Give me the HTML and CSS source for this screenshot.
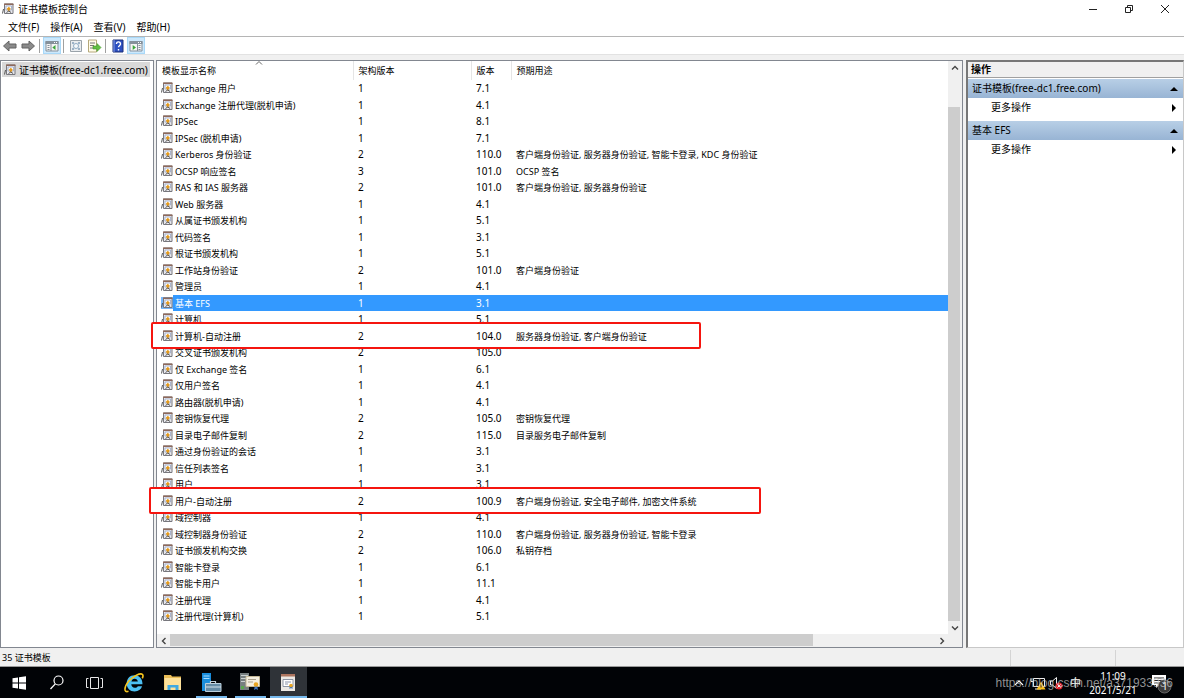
FILE: index.html
```html
<!DOCTYPE html>
<html lang="zh-CN">
<head>
<meta charset="utf-8">
<title>证书模板控制台</title>
<link rel="stylesheet" href="styles.css">
</head>
<body>
<svg class="defs" aria-hidden="true">
  <symbol id="cert" viewBox="0 0 12 12">
    <path d="M2.500 1h8.500v9.500H2.500z" fill="#e9e9ee" stroke="#77777d"/>
    <path d="M2 .5h9.500v1.500H2z" fill="#8f6a5c"/>
    <path d="M4 3h5.500v4H4z" fill="#fff" stroke="#97a4c4" stroke-width=".8"/>
    <path d="M6.800 3.800l2 2-2 3-2-3z" fill="#e39a1c"/>
    <path d="M1.500 6L.500 10.500M4.500 9.500l2.300-1.500 2.300 1.500" fill="none" stroke="#555"/>
  </symbol>
</svg>

<header class="titlebar">
  <svg class="app-icon"><use href="#cert"/></svg>
  <h1>证书模板控制台</h1>
  <div class="window-buttons">
    <button aria-label="最小化"><svg viewBox="0 0 10 10"><path d="M1 5.500h8"/></svg></button>
    <button aria-label="还原"><svg viewBox="0 0 10 10"><path d="M1.500 3.500h5v5h-5zM3.500 3V1.500h5v5H7"/></svg></button>
    <button aria-label="关闭"><svg viewBox="0 0 10 10"><path d="M1 1l8 8M9 1L1 9"/></svg></button>
  </div>
</header>

<nav class="menubar">
  <button>文件(F)</button><button>操作(A)</button><button>查看(V)</button><button>帮助(H)</button>
</nav>

<div class="toolbar">
  <button aria-label="后退"><svg viewBox="0 0 16 14"><path d="M1.500 7L7 2v3h7v4H7v3z" fill="#8b8b8b" stroke="#626262"/></svg></button>
  <button aria-label="前进"><svg viewBox="0 0 16 14"><path d="M14.500 7L9 2v3H2v4h7v3z" fill="#8b8b8b" stroke="#626262"/></svg></button>
  <i class="divider"></i>
  <button class="on" aria-label="显示控制台树"><svg viewBox="0 0 16 14"><path d="M2 2.500h12v9.500H2z" fill="#f4f4f4" stroke="#85909a"/><path d="M1.500 2h13v3h-13z" fill="#85909a"/><path d="M10 3.500h1M12 3.500h1" stroke="#fff"/><path d="M7 5V12M3.500 6.500h2M3.500 8.500h2M3.500 10.500h2" stroke="#85909a"/><path d="M11.500 6v5L8.300 8.500z" fill="#3aa63a"/></svg></button>
  <i class="divider"></i>
  <button aria-label="刷新"><svg viewBox="0 0 16 14"><path d="M2.500 1.500h11v11h-11z" fill="#e9ecef" stroke="#9aa3aa"/><path d="M4 3h2v2H4zM10 3h2v2h-2zM4 9h2v2H4zM10 9h2v2h-2z" fill="#9db2c6"/><circle cx="8" cy="7" r="2.500" fill="#f5f8fa" stroke="#8fabc4"/></svg></button>
  <button aria-label="导出列表"><svg viewBox="0 0 16 14"><path d="M2.500 1h8v12h-8z" fill="#fffbe8" stroke="#b5a87a"/><path d="M4 4h5M4 6.500h4M4 9h4" stroke="#777"/><path d="M7 7h4V4.500L15 8.500l-4 4V10H7z" fill="#62c043" stroke="#3f962a" stroke-width=".6"/></svg></button>
  <i class="divider"></i>
  <button class="help" aria-label="帮助"><svg viewBox="0 0 16 14"><path d="M3 1h10v12H3z" fill="#2c4fc0" stroke="#1d3179"/><path d="M4 1v12" stroke="#8aa0e8"/><path d="M6.500 5c0-3 4-2.700 4 0 0 1.500-2 1.500-2 3.300M8.500 10v1.500" fill="none" stroke="#fff" stroke-width="1.400"/></svg></button>
  <button class="on" aria-label="显示操作窗格"><svg viewBox="0 0 16 14"><path d="M2 2.500h12v9.500H2z" fill="#f4f4f4" stroke="#85909a"/><path d="M1.500 2h13v3h-13z" fill="#85909a"/><path d="M10 3.500h1M12 3.500h1" stroke="#fff"/><path d="M9.500 5V12M10.500 6.500h2M10.500 8.500h2M10.500 10.500h2" stroke="#85909a"/><path d="M4.700 6v5L8 8.500z" fill="#3aa63a"/></svg></button>
</div>

<main class="workspace">
  <aside class="tree">
    <button class="node"><svg class="cert"><use href="#cert"/></svg>证书模板(free-dc1.free.com)</button>
  </aside>

  <section class="list">
    <div class="rows">
      <table>
        <colgroup><col class="c-name"><col class="c-schema"><col class="c-version"><col></colgroup>
        <thead><tr><th>模板显示名称<svg class="sort" viewBox="0 0 8 4"><path d="M1 3.500L4 .5l3 3"/></svg></th><th>架构版本</th><th>版本</th><th>预期用途</th></tr></thead>
        <tbody>
          <tr><td><svg class="cert"><use href="#cert"/></svg>Exchange 用户</td><td>1</td><td>7.1</td><td></td></tr>
          <tr><td><svg class="cert"><use href="#cert"/></svg>Exchange 注册代理(脱机申请)</td><td>1</td><td>4.1</td><td></td></tr>
          <tr><td><svg class="cert"><use href="#cert"/></svg>IPSec</td><td>1</td><td>8.1</td><td></td></tr>
          <tr><td><svg class="cert"><use href="#cert"/></svg>IPSec (脱机申请)</td><td>1</td><td>7.1</td><td></td></tr>
          <tr><td><svg class="cert"><use href="#cert"/></svg>Kerberos 身份验证</td><td>2</td><td>110.0</td><td>客户端身份验证, 服务器身份验证, 智能卡登录, KDC 身份验证</td></tr>
          <tr><td><svg class="cert"><use href="#cert"/></svg>OCSP 响应签名</td><td>3</td><td>101.0</td><td>OCSP 签名</td></tr>
          <tr><td><svg class="cert"><use href="#cert"/></svg>RAS 和 IAS 服务器</td><td>2</td><td>101.0</td><td>客户端身份验证, 服务器身份验证</td></tr>
          <tr><td><svg class="cert"><use href="#cert"/></svg>Web 服务器</td><td>1</td><td>4.1</td><td></td></tr>
          <tr><td><svg class="cert"><use href="#cert"/></svg>从属证书颁发机构</td><td>1</td><td>5.1</td><td></td></tr>
          <tr><td><svg class="cert"><use href="#cert"/></svg>代码签名</td><td>1</td><td>3.1</td><td></td></tr>
          <tr><td><svg class="cert"><use href="#cert"/></svg>根证书颁发机构</td><td>1</td><td>5.1</td><td></td></tr>
          <tr><td><svg class="cert"><use href="#cert"/></svg>工作站身份验证</td><td>2</td><td>101.0</td><td>客户端身份验证</td></tr>
          <tr><td><svg class="cert"><use href="#cert"/></svg>管理员</td><td>1</td><td>4.1</td><td></td></tr>
          <tr class="selected"><td><svg class="cert"><use href="#cert"/></svg>基本 EFS</td><td>1</td><td>3.1</td><td></td></tr>
          <tr><td><svg class="cert"><use href="#cert"/></svg>计算机</td><td>1</td><td>5.1</td><td></td></tr>
          <tr class="marked"><td><span class="mark mark-computer"></span><svg class="cert"><use href="#cert"/></svg>计算机-自动注册</td><td>2</td><td>104.0</td><td>服务器身份验证, 客户端身份验证</td></tr>
          <tr><td><svg class="cert"><use href="#cert"/></svg>交叉证书颁发机构</td><td>2</td><td>105.0</td><td></td></tr>
          <tr><td><svg class="cert"><use href="#cert"/></svg>仅 Exchange 签名</td><td>1</td><td>6.1</td><td></td></tr>
          <tr><td><svg class="cert"><use href="#cert"/></svg>仅用户签名</td><td>1</td><td>4.1</td><td></td></tr>
          <tr><td><svg class="cert"><use href="#cert"/></svg>路由器(脱机申请)</td><td>1</td><td>4.1</td><td></td></tr>
          <tr><td><svg class="cert"><use href="#cert"/></svg>密钥恢复代理</td><td>2</td><td>105.0</td><td>密钥恢复代理</td></tr>
          <tr><td><svg class="cert"><use href="#cert"/></svg>目录电子邮件复制</td><td>2</td><td>115.0</td><td>目录服务电子邮件复制</td></tr>
          <tr><td><svg class="cert"><use href="#cert"/></svg>通过身份验证的会话</td><td>1</td><td>3.1</td><td></td></tr>
          <tr><td><svg class="cert"><use href="#cert"/></svg>信任列表签名</td><td>1</td><td>3.1</td><td></td></tr>
          <tr><td><svg class="cert"><use href="#cert"/></svg>用户</td><td>1</td><td>3.1</td><td></td></tr>
          <tr class="marked"><td><span class="mark mark-user"></span><svg class="cert"><use href="#cert"/></svg>用户-自动注册</td><td>2</td><td>100.9</td><td>客户端身份验证, 安全电子邮件, 加密文件系统</td></tr>
          <tr><td><svg class="cert"><use href="#cert"/></svg>域控制器</td><td>1</td><td>4.1</td><td></td></tr>
          <tr><td><svg class="cert"><use href="#cert"/></svg>域控制器身份验证</td><td>2</td><td>110.0</td><td>客户端身份验证, 服务器身份验证, 智能卡登录</td></tr>
          <tr><td><svg class="cert"><use href="#cert"/></svg>证书颁发机构交换</td><td>2</td><td>106.0</td><td>私钥存档</td></tr>
          <tr><td><svg class="cert"><use href="#cert"/></svg>智能卡登录</td><td>1</td><td>6.1</td><td></td></tr>
          <tr><td><svg class="cert"><use href="#cert"/></svg>智能卡用户</td><td>1</td><td>11.1</td><td></td></tr>
          <tr><td><svg class="cert"><use href="#cert"/></svg>注册代理</td><td>1</td><td>4.1</td><td></td></tr>
          <tr><td><svg class="cert"><use href="#cert"/></svg>注册代理(计算机)</td><td>1</td><td>5.1</td><td></td></tr>
        </tbody>
      </table>
    </div>
    <div class="vscroll">
      <button aria-label="向上滚动"><svg viewBox="0 0 8 8"><path d="M1 5.500l3-3 3 3"/></svg></button>
      <div class="track"><div class="thumb"></div></div>
      <button aria-label="向下滚动"><svg viewBox="0 0 8 8"><path d="M1 2.500l3 3 3-3"/></svg></button>
    </div>
    <div class="hscroll">
      <button aria-label="向左滚动"><svg viewBox="0 0 8 8"><path d="M5.500 1l-3 3 3 3"/></svg></button>
      <div class="track"><div class="thumb"></div></div>
      <button aria-label="向右滚动"><svg viewBox="0 0 8 8"><path d="M2.500 1l3 3-3 3"/></svg></button>
    </div>
    <div class="corner"></div>
  </section>

  <aside class="actions">
    <h2>操作</h2>
    <button class="group">证书模板(free-dc1.free.com)<svg viewBox="0 0 8 8"><path d="M0 6l4-4 4 4z"/></svg></button>
    <button class="item">更多操作<svg viewBox="0 0 8 8"><path d="M2 0l4 4-4 4z"/></svg></button>
    <button class="group">基本 EFS<svg viewBox="0 0 8 8"><path d="M0 6l4-4 4 4z"/></svg></button>
    <button class="item">更多操作<svg viewBox="0 0 8 8"><path d="M2 0l4 4-4 4z"/></svg></button>
  </aside>
</main>

<footer class="statusbar"><span>35 证书模板</span><span></span><span></span></footer>

<div class="taskbar">
  <button aria-label="开始"><svg viewBox="0 0 24 24"><path d="M5.500 7.300l5.500-.8v5H5.500zM12 6.300l7-1v6.200h-7zM5.500 12.500H11v5l-5.500-.8zM12 12.500h7v6.200l-7-1z" fill="#fff"/></svg></button>
  <button aria-label="搜索"><svg viewBox="0 0 24 24"><circle cx="13.500" cy="9.500" r="4.500" fill="none" stroke="#fff" stroke-width="1.200"/><path d="M10.300 12.900L5.500 18" stroke="#fff" stroke-width="1.300"/></svg></button>
  <button aria-label="任务视图"><svg viewBox="0 0 24 24"><path d="M7.500 6.500h8v11h-8zM5.500 7.500h-2v9h2M17.500 7.500h2v9h-2" fill="none" stroke="#e8e8e8"/></svg></button>
  <button class="app" aria-label="Internet Explorer"><svg viewBox="0 0 24 24"><path d="M12.500 4.200c4.800 0 8 3.400 8 9.100H9.300c.2 2.100 1.500 3.400 3.500 3.400 1.400 0 2.400-.5 3-1.500h4.300c-1 3.200-3.800 5.200-7.400 5.200-4.700 0-8-3.300-8-8s3.200-8.200 7.800-8.200zM9.400 10.600h6.500c-.3-1.800-1.500-2.900-3.200-2.900s-2.900 1.100-3.300 2.900z" fill="#4cc0f3" fill-rule="evenodd"/><path d="M6.500 20.300C1.500 22 2 16 6.500 10.500 11 5 18.500 1.500 20.500 3.500c.8.800.6 2.200-.2 3.800" fill="none" stroke="#f6c51f" stroke-width="1.600"/></svg></button>
  <button class="app" aria-label="文件资源管理器"><svg viewBox="0 0 24 24"><path d="M3 4h7l1 1.500h9V19H3z" fill="#e9bd56"/><path d="M3.500 7H20v12H3.500z" fill="#fde19a"/><path d="M6.500 19v-5h11v5h-3v-2.500h-5V19z" fill="#3fa9e1"/></svg></button>
  <button class="app running" aria-label="服务器管理器"><svg viewBox="0 0 24 24"><path d="M2 2h9v18H2z" fill="#198ddc"/><path d="M3.500 5h6M3.500 7.500h6" stroke="#a8dcff"/><path d="M10.500 12.500v-2h5v2" fill="none" stroke="#c3d1da" stroke-width="1.200"/><path d="M5.500 12.500h15.500v8H5.500z" fill="#668ca6" stroke="#bcd0dc"/><path d="M6 16h15" stroke="#d3e2eb"/></svg></button>
  <button class="app running" aria-label="证书颁发机构"><svg viewBox="0 0 24 24"><path d="M1 2h9v17H1z" fill="#777f80"/><path d="M2 4.500h7M2 7.500h7M2 10.500h4" stroke="#cbd1d1"/><path d="M2 15h3v3H2z" fill="#57a84d"/><path d="M7 5.500h13.500v10H7z" fill="#f4eedf" stroke="#c4b897"/><path d="M9 8.500h8M9 11h5" stroke="#aaa08c"/><path d="M16 14l-1 5 2-1 2 1-1-5z" fill="#3e73bd"/><circle cx="17" cy="13.500" r="2.300" fill="#e9a521"/></svg></button>
  <button class="app running active" aria-label="证书模板控制台"><svg viewBox="0 0 24 24"><path d="M4 3h14v17H4z" fill="#ece9e4"/><path d="M4 3h14v2.500H4z" fill="#ad755f"/><path d="M6 8.500h10v7H6z" fill="#fff" stroke="#8d95a3"/><path d="M8 11h6M8 13h3" stroke="#8a93a8"/><path d="M12.500 15v3l1.500-1 1.500 1v-3" fill="#4374b7"/><circle cx="14" cy="14.500" r="1.800" fill="#e9a521"/></svg></button>
  <div class="tray">
    <svg class="tray-icons" viewBox="0 0 56 16">
      <path d="M1 10l4-4 4 4" fill="none" stroke="#fff" stroke-width="1.200"/>
      <path d="M19.500 3.500h11v8h-11zM21 14h6M17 3.500v3h2.500" fill="none" stroke="#eee"/><path d="M27 6.500l4.500 8h-9z" fill="#fbc01e"/><path d="M27 9.500v3" stroke="#222"/>
      <path d="M36.500 6h2l4-3.500v11l-4-3.500h-2z" fill="none" stroke="#eee"/><circle cx="45" cy="11" r="3.500" fill="#e0222c"/><path d="M43.500 9.500l3 3M46.500 9.500l-3 3" stroke="#fff"/>
    </svg>
    <span class="ime">中</span>
    <time>11:09<br>2021/5/21</time>
    <svg class="notice" viewBox="0 0 22 22"><path d="M1 3h14v10H8l-3 3v-3H1z" fill="#fff"/><path d="M3 6h10M3 8.500h10M3 11h5" stroke="#222"/><circle cx="13.500" cy="14.500" r="6.500" fill="#3a3a3a" stroke="#666"/><text x="11" y="18">1</text></svg>
  </div>
  <span class="watermark">https://blog.csdn.net/a371933936</span>
</div>
</body>
</html>
```

FILE: styles.css
```css
* { box-sizing: border-box; }

body {
  margin: 0;
  height: 100vh;
  display: flex;
  flex-direction: column;
  background: #fff;
  color: #000;
  font: 9px/16px "Noto Sans", "Noto Sans CJK SC", sans-serif;
  overflow: hidden;
}

button {
  margin: 0;
  padding: 0;
  border: 0;
  background: none;
  color: inherit;
  font: inherit;
  text-align: left;
}

svg { flex: none; }
.defs { position: absolute; width: 0; height: 0; }

.titlebar { display: flex; align-items: center; height: 17px; flex: none; padding-left: 2px; }
.titlebar h1 { margin: 0 0 0 4px; font-size: 10px; font-weight: 400; }
.app-icon { width: 12px; height: 12px; }
.window-buttons { display: flex; margin-left: auto; padding-right: 1px; }
.window-buttons button { display: grid; place-items: center; width: 36px; height: 17px; }
.window-buttons svg { width: 10px; height: 10px; fill: none; stroke: #222; }

.menubar { display: flex; gap: 11px; height: 20px; flex: none; padding: 2px 8px; border-bottom: 1px solid #b5b5b5; font-size: 10px; }

.toolbar { display: flex; align-items: center; height: 18px; flex: none; padding: 0 1px; border-bottom: 1px solid #e2e2e2; }
.toolbar button { display: grid; place-items: center; width: 18px; height: 17px; }
.toolbar svg { width: 16px; height: 14px; }
.toolbar .on { background: #cce8fc; box-shadow: inset 0 0 0 1px #a8d8f8; }
.toolbar .divider { width: 1px; height: 14px; margin: 0 3px 0 2px; background: #a0a0a0; }

.workspace {
  flex: 1;
  min-height: 0;
  display: grid;
  grid-template-columns: 154px minmax(0, 1fr) 218px;
  column-gap: 2px;
  padding-top: 5px;
  background: #f0f0f0;
}

.tree { border: 1px solid #828790; background: #fff; padding: 1px; }
.node { display: flex; align-items: center; gap: 3px; width: 148px; height: 15px; padding-left: 2px; background: #d9d9d9; white-space: nowrap; font-size: 10px; line-height: 14px; }
.cert { width: 12px; height: 12px; }

.list {
  display: grid;
  grid-template: minmax(0, 1fr) 13px / minmax(0, 1fr) 14px;
  margin-right: 1px;
  border: 1px solid #828790;
  background: #fff;
}
table { width: 100%; table-layout: fixed; border-collapse: collapse; }
.c-name { width: 196px; }
.c-schema { width: 118px; }
.c-version { width: 40px; }
th, td { padding: 0 0 0 5px; text-align: left; font-weight: 400; white-space: nowrap; line-height: 15px; }
td:first-child { padding-left: 4px; }
th { position: relative; height: 19px; border-right: 1px solid #e5e5e5; }
th:last-child { border-right: 0; }
.sort { position: absolute; left: 50%; top: 0; width: 8px; height: 4px; fill: none; stroke: #666; }
tbody tr { height: 17px; }
tbody tr:nth-child(even) { height: 16px; }
td .cert { margin-right: 2px; vertical-align: -2px; }
td:nth-child(2), td:nth-child(3) { font-size: 10px; }
.selected { color: #fff; background: linear-gradient(#3399ff, #3399ff) no-repeat 16px 0; }
.selected .cert { background: #78b7f8; }

.marked { position: relative; z-index: 1; }
.mark { position: absolute; z-index: -1; top: -6px; height: 27px; border: 2px solid #f5150f; border-radius: 2px; background: #fff; }
.mark-computer { left: -6px; width: 550px; }
.mark-user { left: -8px; width: 612px; }

.vscroll, .hscroll, .corner { display: flex; background: #f0f0f0; }
.vscroll { flex-direction: column; }
.vscroll button, .hscroll button { display: grid; place-items: center; width: 13px; height: 13px; }
.vscroll svg, .hscroll svg { width: 8px; height: 8px; fill: none; stroke: #444; stroke-width: 1.400; }
.track { flex: 1; }
.thumb { background: #cdcdcd; }
.vscroll .track { display: flex; flex-direction: column; justify-content: flex-end; }
.vscroll .thumb { width: 12px; height: 94%; }
.hscroll .thumb { width: 84%; height: 12px; }

.actions { display: flex; flex-direction: column; border: 1px solid #c8c8c8; border-top: 2px solid #777; border-left: 2px solid #777; background: #fff; }
.actions h2 { margin: 0 0 1px; height: 16px; padding-left: 3px; border-bottom: 1px solid #a0a0a0; background: #f0f0f0; font-size: 10px; line-height: 15px; }
.actions button { display: flex; align-items: center; justify-content: space-between; height: 19px; padding: 0 5px 0 4px; line-height: 15px; }
.actions .group { background: linear-gradient(#b8cfe6, #98b4d4); font-size: 10px; }
.actions .item { padding-left: 23px; margin-bottom: 4px; font-size: 10px; }
.actions svg { width: 8px; height: 8px; }

.statusbar { display: flex; height: 19px; flex: none; padding-top: 2px; background: #f0f0f0; border-bottom: 1px solid #999; }
.statusbar span { width: 105px; border-left: 1px solid #d4d4d4; }
.statusbar span:first-child { flex: 1; padding-left: 2px; border: 0; }
.statusbar span:last-child { width: 69px; }

.taskbar { position: relative; display: flex; height: 31px; flex: none; background: #010306; color: #fff; }
.taskbar button { display: grid; place-items: center; width: 38px; height: 31px; }
.taskbar .app { width: 39px; }
.taskbar button svg { width: 24px; height: 24px; }
.running { background: linear-gradient(#76b9ed, #76b9ed) no-repeat center bottom / 31px 2px; }
.taskbar .active { width: 37px; background: linear-gradient(#76b9ed, #76b9ed) no-repeat center bottom / 100% 2px #2f3338; }
.tray { display: flex; align-items: center; margin-left: auto; padding-right: 11px; }
.tray-icons { width: 56px; height: 16px; }
.ime { font-size: 11px; margin-right: 8px; }
.tray time { width: 48px; font-size: 10px; line-height: 14px; text-align: center; }
.notice { width: 22px; height: 22px; margin-left: 14px; }
.notice text { fill: #fff; font-size: 10px; }
.watermark { position: absolute; right: 11px; top: 8px; color: #c8c8c8b8; font: 12px/16px "Liberation Sans", sans-serif; }
```
